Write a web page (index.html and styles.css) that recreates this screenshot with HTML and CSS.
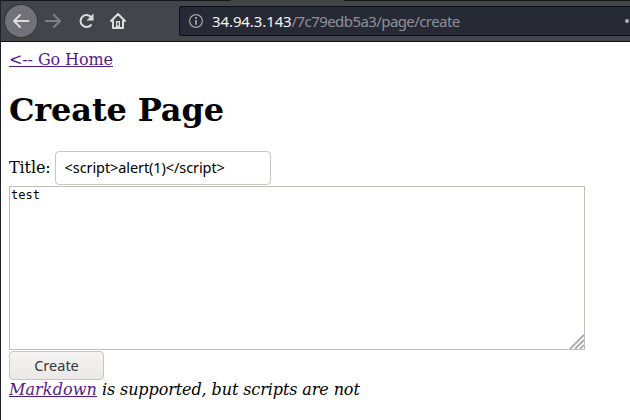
FILE: index.html
```html
<!DOCTYPE html>
<html lang="en">
<head>
<meta charset="utf-8">
<title>Create Page</title>
<link rel="stylesheet" href="styles.css">
</head>
<body>
<header class="toolbar">
  <i class="tab-edge"></i>
  <span class="nav back"><svg width="18" height="18" viewBox="0 0 18 18"><path d="M16.500 9H2.500M8 3L2 9l6 6"/></svg></span>
  <span class="nav forward"><svg width="18" height="18" viewBox="0 0 18 18"><path d="M2 9h14M10 3l6 6-6 6"/></svg></span>
  <span class="nav reload"><svg width="18" height="18" viewBox="0 0 18 18"><path d="M14 13A6 6 0 1 1 14 5"/><path class="solid" d="M16.500 1.500v7h-7z"/></svg></span>
  <span class="nav home"><svg width="18" height="18" viewBox="0 0 18 18"><path d="M2 9L9 2l7 7M4 8.500V16h10V8.500"/><path class="solid" d="M7 9h4v6H7z"/><path class="knob" d="M9 11v2"/></svg></span>
  <div class="address">
    <svg class="info" width="14" height="14" viewBox="0 0 14 14"><circle cx="7" cy="7" r="6.400"/><path class="mark" d="M7 6v4.800M7 3v1.900"/></svg>
    <span class="url"><b>34.94.3.143</b>/7c79edb5a3/page/create</span>
    <i class="more"></i>
  </div>
</header>
<main class="page">
  <a class="link home-link" href="#">&lt;-- Go Home</a>
  <h1>Create Page</h1>
  <div class="field"><label>Title:</label><span class="title-input">&lt;script&gt;alert(1)&lt;/script&gt;</span></div>
  <div class="body-input">test<svg class="grip" width="15" height="15" viewBox="0 0 15 15"><path d="M1 15L15 1M6 15l9-9M11 15l4-4"/></svg></div>
  <button class="create">Create</button>
  <p class="note"><a class="link" href="#">Markdown</a> is supported, but scripts are not</p>
</main>
</body>
</html>
```
FILE: styles.css
```css
* { box-sizing: border-box; }
html { background: #fff; }
body { display: flex; flex-direction: column; margin: 0; height: 420px; overflow: hidden; color: #000; font: 16px/19px "DejaVu Serif", serif; border-left: 1px solid #20212b; }
.toolbar { position: relative; display: flex; flex: none; align-items: center; height: 42px; background: #43454b; border-top: 1px solid #17181d; border-bottom: 1px solid #0c0c0d; padding-left: 4px; }
.tab-edge { position: absolute; top: -1px; left: 230px; width: 113px; height: 1px; background: #43454b; }
.nav { display: flex; align-items: center; justify-content: center; width: 32px; height: 32px; }
.nav svg { fill: none; stroke: #dcdcda; stroke-width: 2; stroke-linecap: round; stroke-linejoin: round; }
.nav .solid { fill: #dcdcda; stroke: none; }
.nav .knob { stroke: #43454b; stroke-width: 1.5; }
.back { background: #717177; border-radius: 50%; box-shadow: 0 0 0 1px #35363b; }
.forward { opacity: .4; }
.reload, .home { position: relative; left: 1px; }
.address { flex: 1; display: flex; align-items: center; height: 30px; margin-left: 46px; background: #272935; border: 1px solid #0e0f14; border-right: 0; border-radius: 3px 0 0 3px; padding-left: 9px; }
.info { fill: none; stroke: #a5a5a8; stroke-width: 1.2; }
.info .mark { stroke-width: 1.8; }
.url { margin-left: 9px; font: 15px/20px "Noto Sans", sans-serif; letter-spacing: -.58px; color: #8f9095; }
.url b { font-weight: 400; letter-spacing: -.1px; color: #f4f4f4; }
.more { margin-left: auto; margin-right: 1px; width: 4px; height: 4px; border-radius: 50%; background: #b1b1b3; }
.page { flex: 1; padding: 8px; }
.home-link { letter-spacing: -.1px; }
.link { color: #551a8b; }
h1 { margin: 22px 0 21px; font-size: 32px; line-height: 38px; letter-spacing: -.13px; }
.field { display: flex; align-items: center; height: 36px; letter-spacing: -.1px; }
.field label { padding-bottom: 2px; }
.title-input { width: 216px; height: 34px; margin-left: 4px; padding: 0 9px; border: 1px solid #c8c4be; border-radius: 4px; font: 14.500px/31px "Noto Sans", sans-serif; letter-spacing: -.09px; }
.body-input { position: relative; width: 576px; height: 164px; border: 1px solid #c0bcb6; font: 12px/16px "DejaVu Sans Mono", monospace; padding: 0 1px; }
.grip { position: absolute; right: 0; bottom: 0; stroke: #aaa; stroke-width: 1.8; fill: none; }
.create { display: block; width: 95px; height: 29px; margin-top: 1px; padding: 0 0 2px; border: 1px solid #c8c4be; border-radius: 4px; background: linear-gradient(#f5f4f3, #eae9e7); font: 14.500px "Noto Sans", sans-serif; color: #35393c; }
.note { margin: 0; font-style: italic; letter-spacing: -.1px; }
.note .link { letter-spacing: .1px; }
```
